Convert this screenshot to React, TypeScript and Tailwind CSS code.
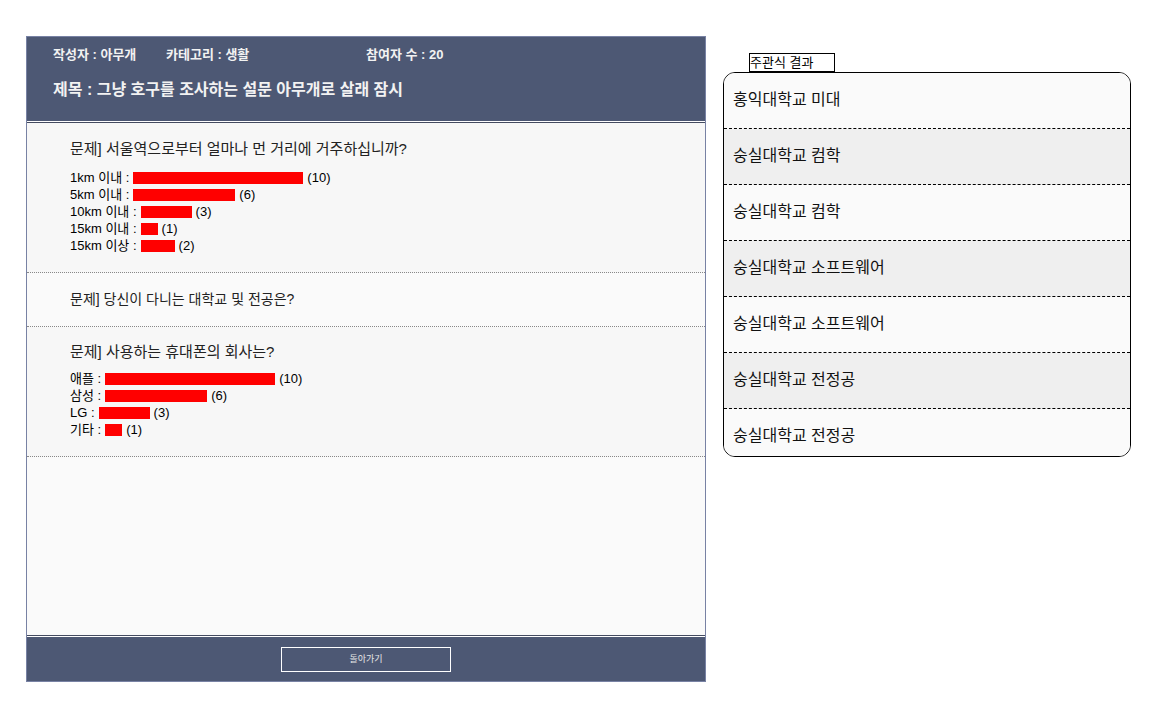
import React from "react";

const font = { fontFamily: '"Liberation Sans", "Noto Sans CJK KR", sans-serif' };

type Row = { label: string; count: number };

const q1: Row[] = [
  { label: "1km 이내 :", count: 10 },
  { label: "5km 이내 :", count: 6 },
  { label: "10km 이내 :", count: 3 },
  { label: "15km 이내 :", count: 1 },
  { label: "15km 이상 :", count: 2 },
];

const q3: Row[] = [
  { label: "애플 :", count: 10 },
  { label: "삼성 :", count: 6 },
  { label: "LG :", count: 3 },
  { label: "기타 :", count: 1 },
];

const answers = [
  "홍익대학교 미대",
  "숭실대학교 컴학",
  "숭실대학교 컴학",
  "숭실대학교 소프트웨어",
  "숭실대학교 소프트웨어",
  "숭실대학교 전정공",
  "숭실대학교 전정공",
];

function Bars({ rows }: { rows: Row[] }) {
  return (
    <div className="flex flex-col pl-[43px]">
      {rows.map((r, i) => (
        <div key={i} className="flex items-center h-[17px] text-[13px] text-black leading-none">
          <span>{r.label}</span>
          <span className="ml-[4px] h-[12px] bg-[#ff0000]" style={{ width: r.count * 17 }} />
          <span className="ml-[4px]">({r.count})</span>
        </div>
      ))}
    </div>
  );
}

export default function App() {
  return (
    <div className="flex items-start bg-white w-[1175px] h-[725px]" style={font}>
      <div className="ml-[26px] mt-[36px] w-[680px] h-[646px] border border-[#7882a4] flex flex-col">
        <div className="h-[85px] bg-[#4d5874] border-b border-white flex flex-col text-[#f2f2f2]">
          <div className="flex pl-[26px] pt-[9px] text-[13px] font-semibold leading-[18px]">
            <span className="w-[113px]">작성자 : 아무개</span>
            <span className="w-[200px]">카테고리 : 생활</span>
            <span>참여자 수 : 20</span>
          </div>
          <div className="pl-[26px] mt-[15px] text-[16px] font-semibold leading-[22px]">
            제목 : 그냥 호구를 조사하는 설문 아무개로 살래 잠시
          </div>
        </div>
        <div className="flex-1 flex flex-col border-t border-[#444b60] border-b bg-[#fafafa]">
          <div className="bg-[#f7f7f7] pt-[16px] pb-[18px] border-b border-dotted border-[#888]">
            <div className="pl-[43px] text-[15px] leading-[20px] text-[#222] mb-[10px]">
              문제] 서울역으로부터 얼마나 먼 거리에 거주하십니까?
            </div>
            <Bars rows={q1} />
          </div>
          <div className="bg-[#fafafa] pt-[16px] pb-[17px] border-b border-dotted border-[#888]">
            <div className="pl-[43px] text-[14px] leading-[20px] text-[#222]">
              문제] 당신이 다니는 대학교 및 전공은?
            </div>
          </div>
          <div className="bg-[#f7f7f7] pt-[15px] pb-[18px] border-b border-dotted border-[#888]">
            <div className="pl-[43px] text-[15px] leading-[20px] text-[#222] mb-[8px]">
              문제] 사용하는 휴대폰의 회사는?
            </div>
            <Bars rows={q3} />
          </div>
          <div className="flex-1 bg-[#fafafa]" />
        </div>
        <div className="h-[45px] bg-[#4d5874] border-t border-white flex items-center justify-center">
          <div className="w-[170px] h-[25px] border border-white flex items-center justify-center text-[9px] text-[#e6e6e6] leading-none">
            돌아가기
          </div>
        </div>
      </div>

      <div className="ml-[17px] mt-[53px] flex flex-col">
        <div className="ml-[26px] w-[86px] h-[19px] border border-black text-[13px] leading-[17px] text-black">
          주관식 결과
        </div>
        <div className="w-[408px] h-[385px] border border-black rounded-[12px] overflow-hidden flex flex-col">
          {answers.map((a, i) => (
            <div
              key={i}
              className={`shrink-0 h-[56px] flex items-start pt-[16px] pl-[9px] text-[16px] leading-[22px] text-[#111] ${
                i % 2 === 1 ? "bg-[#efefef]" : "bg-[#fafafa]"
              } ${i < answers.length - 1 ? "border-b border-dashed border-black" : ""}`}
            >
              {a}
            </div>
          ))}
        </div>
      </div>
    </div>
  );
}
